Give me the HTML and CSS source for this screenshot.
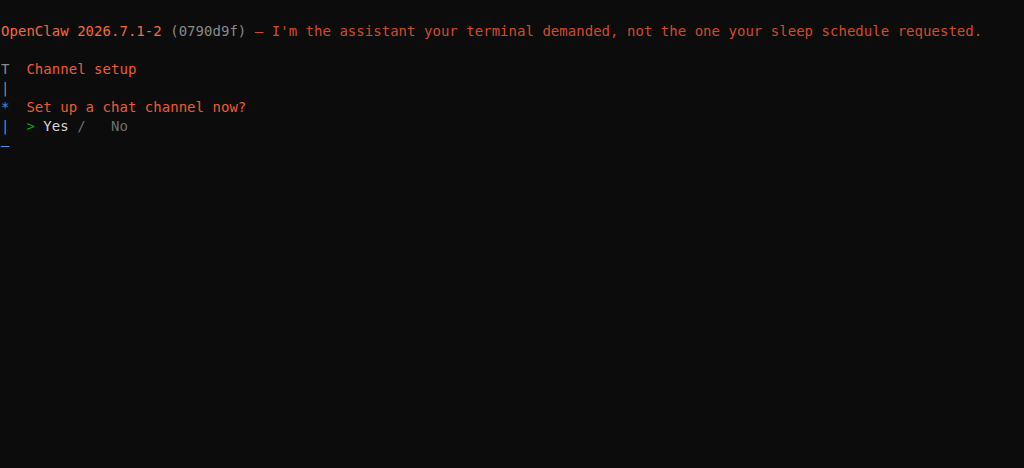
FILE: index.html
```html
<!DOCTYPE html>
<html lang="en">
<head>
<meta charset="utf-8">
<title>OpenClaw</title>
<link rel="stylesheet" href="styles.css">
</head>
<body>
<main class="term">
<div class="line"><span class="title">OpenClaw 2026.7.1-2</span> <span class="hash">(0790d9f)</span> <span class="tag">— I'm the assistant your terminal demanded, not the one your sleep schedule requested.</span></div>
<div class="line"> </div>
<div class="line"><span class="gutter">T</span>  <span class="accent">Channel setup</span></div>
<div class="line"><span class="gutter">|</span></div>
<div class="line"><span class="blue">*</span>  <span class="accent">Set up a chat channel now?</span></div>
<div class="line"><span class="blue">|</span>  <span class="green">&gt;</span> <span class="sel">Yes</span> <span class="dim">/</span>   <span class="dim">No</span></div>
<div class="line"><span class="blue">—</span></div>
</main>
</body>
</html>
```

FILE: styles.css
```css
html, body {
  margin: 0;
  padding: 0;
  background: #0c0c0c;
  height: 100%;
}
.term {
  padding: 22px 0 0 1px;
  font-family: "DejaVu Sans Mono", "Liberation Mono", monospace;
  font-size: 14px;
  letter-spacing: 0.03px;
  line-height: 19px;
  color: #cccccc;
}
.line {
  white-space: pre;
  height: 19px;
}
.title {
  color: #f36a3c;
}
.hash {
  color: #8a8a8a;
}
.tag {
  color: #d24b27;
}
.accent {
  color: #ec5c31;
}
.gutter {
  color: #8a8a8a;
}
.blue {
  color: #3a96dd;
}
.green {
  color: #13a10e;
}
.sel {
  color: #d6d6d6;
}
.dim {
  color: #6f6f6f;
}
```
